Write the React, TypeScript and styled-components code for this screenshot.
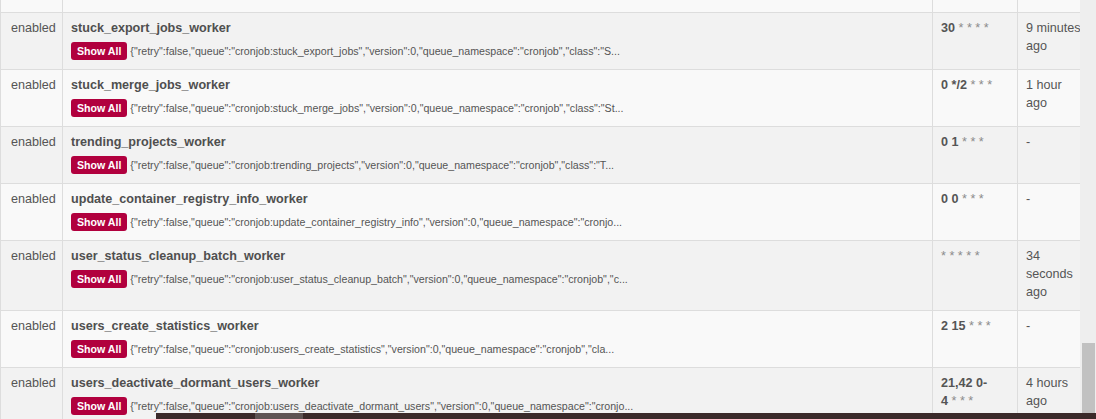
import React from "react";
import styled, { createGlobalStyle } from "styled-components";

type CronJob = {
  name: string;
  args: string;
  cron: string;
  lastRun: string;
};

const jobs: CronJob[] = [
  {
    name: "stuck_ci_jobs_worker",
    args: '{"retry":false,"queue":"cronjob:stuck_ci_jobs","version":0,"queue_namespace":"cronjob","class":"StuckC...',
    cron: "0 * * * *",
    lastRun: "20 seconds ago",
  },
  {
    name: "stuck_export_jobs_worker",
    args: '{"retry":false,"queue":"cronjob:stuck_export_jobs","version":0,"queue_namespace":"cronjob","class":"S...',
    cron: "30 * * * *",
    lastRun: "9 minutes ago",
  },
  {
    name: "stuck_merge_jobs_worker",
    args: '{"retry":false,"queue":"cronjob:stuck_merge_jobs","version":0,"queue_namespace":"cronjob","class":"St...',
    cron: "0 */2 * * *",
    lastRun: "1 hour ago",
  },
  {
    name: "trending_projects_worker",
    args: '{"retry":false,"queue":"cronjob:trending_projects","version":0,"queue_namespace":"cronjob","class":"T...',
    cron: "0 1 * * *",
    lastRun: "-",
  },
  {
    name: "update_container_registry_info_worker",
    args: '{"retry":false,"queue":"cronjob:update_container_registry_info","version":0,"queue_namespace":"cronjo...',
    cron: "0 0 * * *",
    lastRun: "-",
  },
  {
    name: "user_status_cleanup_batch_worker",
    args: '{"retry":false,"queue":"cronjob:user_status_cleanup_batch","version":0,"queue_namespace":"cronjob","c...',
    cron: "* * * * *",
    lastRun: "34 seconds ago",
  },
  {
    name: "users_create_statistics_worker",
    args: '{"retry":false,"queue":"cronjob:users_create_statistics","version":0,"queue_namespace":"cronjob","cla...',
    cron: "2 15 * * *",
    lastRun: "-",
  },
  {
    name: "users_deactivate_dormant_users_worker",
    args: '{"retry":false,"queue":"cronjob:users_deactivate_dormant_users","version":0,"queue_namespace":"cronjo...',
    cron: "21,42 0-4 * * *",
    lastRun: "4 hours ago",
  },
];

// fields joined by nbsp; a ranged field may break after its hyphen
const CronText: React.FC<{ cron: string }> = ({ cron }) => (
  <>
    {cron.split(" ").map((field, i) => (
      <React.Fragment key={i}>
        {i > 0 && "\u00a0"}
        {field === "*" ? (
          <Wild>*</Wild>
        ) : (
          <Fixed>{field.replace("-", "-\u200b")}</Fixed>
        )}
      </React.Fragment>
    ))}
  </>
);

const App: React.FC = () => (
  <>
    <GlobalStyle />
    <Page>
      <Main>
        <Table>
          <colgroup>
            <col style={{ width: 62 }} />
            <col style={{ width: 870 }} />
            <col style={{ width: 85 }} />
            <col style={{ width: 64 }} />
          </colgroup>
          <tbody>
            {jobs.map((job, i) => (
              <Row key={job.name} $shade={i % 2 === 1}>
                <StatusCell>enabled</StatusCell>
                <Cell>
                  <JobName>{job.name}</JobName>
                  <ArgsLine>
                    <ShowAll>Show All</ShowAll>
                    <Args>{job.args}</Args>
                  </ArgsLine>
                </Cell>
                <Cell>
                  <CronText cron={job.cron} />
                </Cell>
                <LastCell $tail={i === 0}>{job.lastRun}</LastCell>
              </Row>
            ))}
          </tbody>
        </Table>
      </Main>
      <ScrollTrack>
        <ScrollThumb />
      </ScrollTrack>
    </Page>
    <BottomBar>
      <BottomThumb />
    </BottomBar>
  </>
);

const GlobalStyle = createGlobalStyle`
  html, body {
    margin: 0;
    padding: 0;
    height: 100%;
    overflow: hidden;
    background: #f3f3f3;
  }
  body {
    font-family: "Liberation Sans", Arial, sans-serif;
    font-size: 12.6px;
    line-height: 18px;
    color: #555;
  }
`;

const Page = styled.div`
  display: flex;
  height: 100vh;
  overflow: hidden;
`;

const Main = styled.div`
  flex: none;
  width: 1080px;
  overflow: hidden;
`;

const Table = styled.table`
  width: 1081px;
  margin-top: -61px;
  table-layout: fixed;
  border-collapse: collapse;
`;

const Row = styled.tr<{ $shade: boolean }>`
  background: ${(p) => (p.$shade ? "#f2f2f2" : "#f9f9f9")};
`;

const Cell = styled.td`
  border: 1px solid #ddd;
  padding: 6px 8px 9px;
  vertical-align: top;
`;

const StatusCell = styled(Cell)`
  padding-left: 10px;
  padding-right: 4px;
`;

const LastCell = styled(Cell)<{ $tail?: boolean }>`
  padding-right: 0;
  padding-bottom: ${(p) => (p.$tail ? "12px" : "9px")};
`;

const JobName = styled.div`
  font-weight: bold;
  color: #4f4f4f;
  white-space: nowrap;
`;

const ArgsLine = styled.div`
  display: flex;
  align-items: center;
  gap: 3px;
  height: 18px;
  margin-top: 5px;
`;

const ShowAll = styled.button`
  flex: none;
  height: 18px;
  padding: 0 6px;
  border: 0;
  border-radius: 3px;
  background: #b1003e;
  color: #fff;
  font-family: "Liberation Sans", Arial, sans-serif;
  font-size: 10.6px;
  font-weight: bold;
  line-height: 18px;
`;

const Args = styled.span`
  font-size: 10.65px;
  color: #555;
  white-space: nowrap;
`;

const Fixed = styled.b`
  color: #555;
`;

const Wild = styled.span`
  color: #8c8c8c;
`;

const ScrollTrack = styled.div`
  flex: 1;
  display: flex;
  flex-direction: column;
  justify-content: flex-end;
  padding: 0 1px 0 2px;
  background: #eeeeee;
`;

const ScrollThumb = styled.div`
  height: 76px;
  background: #c1c1c1;
`;

const BottomBar = styled.div`
  position: fixed;
  left: 156px;
  right: 0;
  bottom: 0;
  height: 6px;
  background: #3b2a2a;
`;

const BottomThumb = styled.div`
  width: 48px;
  height: 100%;
  margin-left: 99px;
  background: #5e5353;
`;

export default App;
